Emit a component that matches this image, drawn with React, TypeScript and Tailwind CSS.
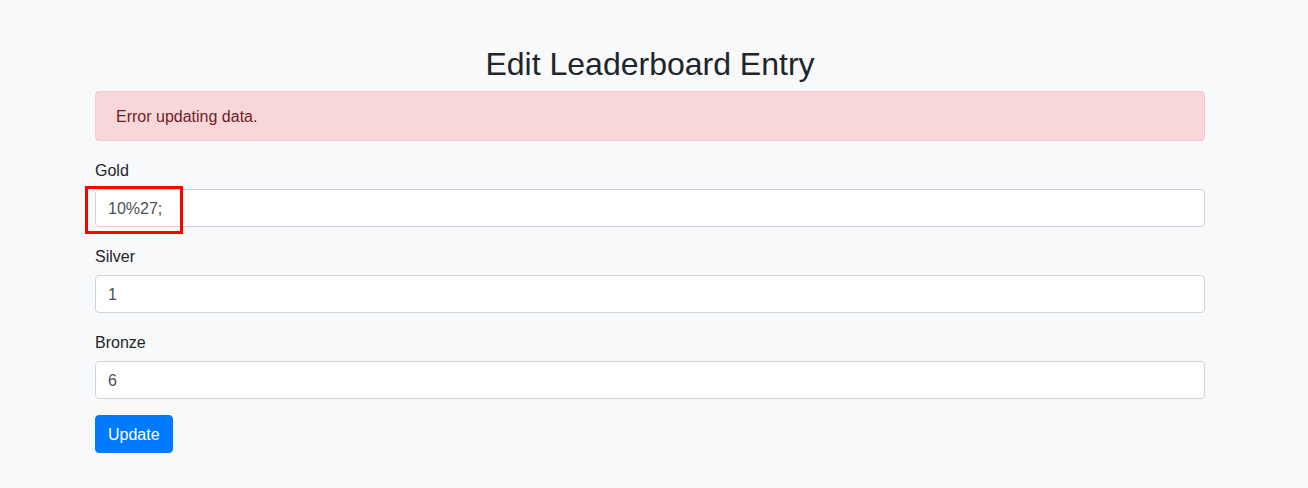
import React from "react";

const inputCls =
  "block w-full h-[38px] px-3 pt-[7px] pb-[5px] text-base leading-6 text-[#495057] bg-white border border-[#ced4da] rounded-[4px] outline-none";

export default function App() {
  return (
    <div
      className="min-h-[488px] bg-[#f8f9fa] text-[#212529]"
      style={{ fontFamily: '"Liberation Sans", Arial, sans-serif' }}
    >
      <div className="w-[1110px] ml-[95px] pt-[45px]">
        <h2 className="text-[32px] leading-[38.4px] font-medium text-center mb-2">
          Edit Leaderboard Entry
        </h2>
        <div className="px-5 pt-[13px] pb-[11px] mb-4 text-base leading-6 text-[#721c24] bg-[#f8d7da] border border-[#f5c6cb] rounded-[4px]">
          Error updating data.
        </div>
        <form onSubmit={(e) => e.preventDefault()}>
          <div className="mb-4">
            <label className="block pt-[2px] mb-[6px] text-base leading-6">Gold</label>
            <div className="relative">
              <input className={inputCls} defaultValue="10%27;" />
              <div className="absolute left-[-10px] top-[-3px] w-[98px] h-[48px] border-[3px] border-[#ff0000] pointer-events-none" />
            </div>
          </div>
          <div className="mb-4">
            <label className="block pt-[2px] mb-[6px] text-base leading-6">Silver</label>
            <input className={inputCls} defaultValue="1" />
          </div>
          <div className="mb-4">
            <label className="block pt-[2px] mb-[6px] text-base leading-6">Bronze</label>
            <input className={inputCls} defaultValue="6" />
          </div>
          <button
            type="submit"
            className="h-[38px] px-3 pt-[7px] pb-[5px] text-base leading-6 text-white bg-[#007bff] border border-[#007bff] rounded-[4px]"
          >
            Update
          </button>
        </form>
      </div>
    </div>
  );
}
